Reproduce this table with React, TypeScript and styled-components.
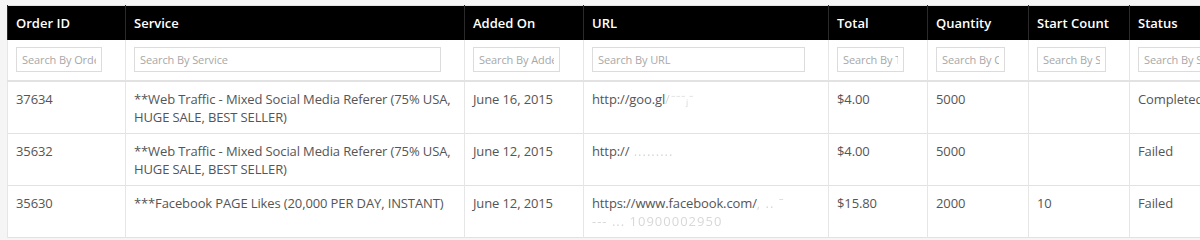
import React from 'react';
import styled, { createGlobalStyle } from 'styled-components';

const GlobalStyle = createGlobalStyle`
  html, body {
    margin: 0;
    padding: 0;
    background: #f5f5f5;
    overflow: hidden;
  }
  body {
    font-family: "Open Sans", "Liberation Sans", Arial, sans-serif;
    font-size: 13px;
    color: #555;
  }
`;

const Page = styled.div`
  padding: 5px 0 0 7px;
  width: 1240px;
`;

const Table = styled.table`
  table-layout: fixed;
  width: 1222px;
  border-collapse: collapse;
  background: #fff;
  border: 1px solid #e2e2e2;
`;

const HeadCell = styled.th`
  background: #000;
  color: #fff;
  font-weight: 600;
  text-align: left;
  padding: 8px 8px;
  line-height: 18px;
  border-left: 1px solid #2a2a2a;
  white-space: nowrap;
  overflow: hidden;
`;

const FilterCell = styled.td`
  padding: 7px 8px 8px 8px;
  border-left: 1px solid #e6e6e6;
  border-bottom: 2px solid #e2e2e2;
  overflow: hidden;
`;

const SearchInput = styled.input`
  display: block;
  box-sizing: border-box;
  width: calc(100% - 15px);
  height: 25px;
  border: 1px solid #dcdcdc;
  padding: 0 5px;
  font-family: "Open Sans", "Liberation Sans", Arial, sans-serif;
  font-size: 11px;
  letter-spacing: -0.1px;
  color: #555;
  background: #fff;
  outline: none;

  &::placeholder {
    color: #a8a8a8;
  }
`;

const Cell = styled.td<{ $nowrap?: boolean }>`
  vertical-align: top;
  padding: 8px 8px 7px 8px;
  line-height: 18px;
  height: 36px;
  letter-spacing: -0.12px;
  border-left: 1px solid #e6e6e6;
  border-top: 1px solid #e2e2e2;
  overflow: hidden;
  white-space: ${(p) => (p.$nowrap ? 'nowrap' : 'normal')};
`;

const Faded = styled.span`
  color: #d8d8d8;
  filter: blur(0.6px);
  letter-spacing: 1px;
`;

const columns: { title: string; width: number; placeholder: string }[] = [
  { title: 'Order ID', width: 118, placeholder: 'Search By Order ID' },
  { title: 'Service', width: 339, placeholder: 'Search By Service' },
  { title: 'Added On', width: 119, placeholder: 'Search By Added On' },
  { title: 'URL', width: 245, placeholder: 'Search By URL' },
  { title: 'Total', width: 99, placeholder: 'Search By Total' },
  { title: 'Quantity', width: 101, placeholder: 'Search By Quantity' },
  { title: 'Start Count', width: 101, placeholder: 'Search By Start Count' },
  { title: 'Status', width: 100, placeholder: 'Search By Status' },
];

type Order = {
  id: string;
  service: string;
  added: string;
  url: React.ReactNode;
  total: string;
  quantity: string;
  start: string;
  status: string;
};

const orders: Order[] = [
  {
    id: '37634',
    service: '**Web Traffic - Mixed Social Media Referer (75% USA, HUGE SALE, BEST SELLER)',
    added: 'June 16, 2015',
    url: (
      <>
        http://goo.gl<Faded>/⁻⁻⁻ⱼ⁻</Faded>
      </>
    ),
    total: '$4.00',
    quantity: '5000',
    start: '',
    status: 'Completed',
  },
  {
    id: '35632',
    service: '**Web Traffic - Mixed Social Media Referer (75% USA, HUGE SALE, BEST SELLER)',
    added: 'June 12, 2015',
    url: (
      <>
        http://<Faded>{'              '}.........</Faded>
      </>
    ),
    total: '$4.00',
    quantity: '5000',
    start: '',
    status: 'Failed',
  },
  {
    id: '35630',
    service: '***Facebook PAGE Likes (20,000 PER DAY, INSTANT)',
    added: 'June 12, 2015',
    url: (
      <>
        https://www.facebook.com/<Faded>,  .. ˉ</Faded>
        <br />
        <Faded>--- ...  10900002950</Faded>
      </>
    ),
    total: '$15.80',
    quantity: '2000',
    start: '10',
    status: 'Failed',
  },
];

export default function App() {
  return (
    <>
      <GlobalStyle />
      <Page>
        <Table>
          <colgroup>
            {columns.map((c) => (
              <col key={c.title} style={{ width: c.width }} />
            ))}
          </colgroup>
          <thead>
            <tr>
              {columns.map((c) => (
                <HeadCell key={c.title}>{c.title}</HeadCell>
              ))}
            </tr>
            <tr>
              {columns.map((c) => (
                <FilterCell key={c.title}>
                  <SearchInput type="text" placeholder={c.placeholder} />
                </FilterCell>
              ))}
            </tr>
          </thead>
          <tbody>
            {orders.map((o) => (
              <tr key={o.id}>
                <Cell>{o.id}</Cell>
                <Cell>{o.service}</Cell>
                <Cell $nowrap>{o.added}</Cell>
                <Cell $nowrap>{o.url}</Cell>
                <Cell>{o.total}</Cell>
                <Cell>{o.quantity}</Cell>
                <Cell>{o.start}</Cell>
                <Cell $nowrap>{o.status}</Cell>
              </tr>
            ))}
          </tbody>
        </Table>
      </Page>
    </>
  );
}
